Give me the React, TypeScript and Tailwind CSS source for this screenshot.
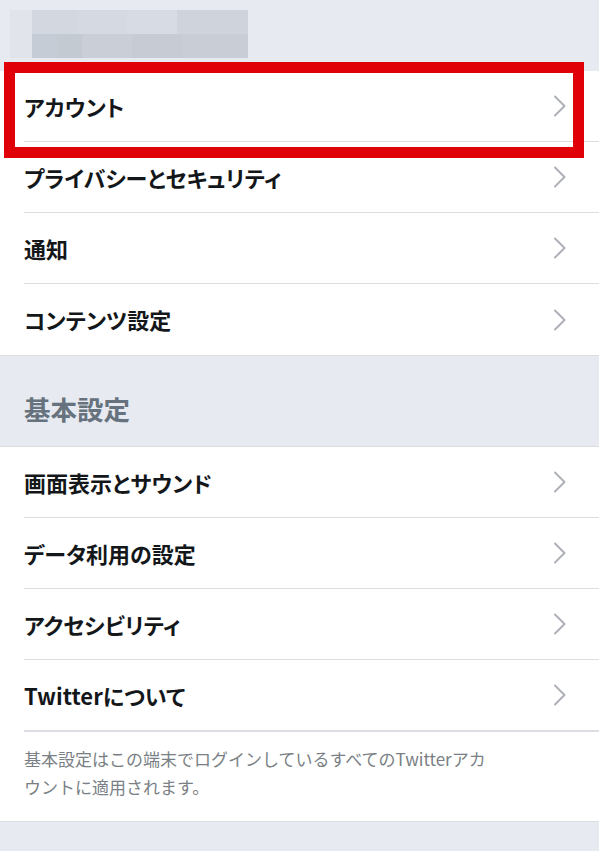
import React from 'react';

const font = { fontFamily: '"Noto Sans CJK JP", "Noto Sans", sans-serif' };

const Chevron = () => (
  <svg width="14" height="22" viewBox="0 0 14 22" fill="none" className="shrink-0">
    <path d="M2 1.5 L11.5 11 L2 20.5" stroke="#adb1b7" strokeWidth="2" strokeLinecap="round" strokeLinejoin="round" />
  </svg>
);

const Row = ({ label, last }: { label: string; last?: boolean }) => (
  <div className="flex h-[71px] items-stretch bg-white pl-6">
    <div className={`flex flex-1 items-center justify-between pr-[32px] ${last ? '' : 'border-b border-[#dcdde2]'}`}>
      <span className="text-[22px] font-bold text-[#14171a] [font-feature-settings:'palt']">{label}</span>
      <Chevron />
    </div>
  </div>
);

export default function App() {
  return (
    <div className="min-h-[851px] w-[599px] bg-[#e7eaf1]" style={font}>
      <div className="relative">
        {/* blurred profile header */}
        <div className="flex h-[71px] items-start px-[10px] pt-[10px]">
          <div className="h-[48px] w-[22px] bg-[#e1e4eb]" />
          <div className="flex flex-col">
            <div className="flex h-[24px]">
              <div className="w-[45px] bg-[#d3d8e0]" />
              <div className="w-[50px] bg-[#d5dae2]" />
              <div className="w-[50px] bg-[#d7dce4]" />
              <div className="w-[71px] bg-[#cfd3db]" />
            </div>
            <div className="flex h-[24px]">
              <div className="w-[25px] bg-[#c6ccd5]" />
              <div className="w-[25px] bg-[#c3cad2]" />
              <div className="w-[50px] bg-[#c9ced7]" />
              <div className="w-[50px] bg-[#c6cbd4]" />
              <div className="w-[66px] bg-[#c9ced6]" />
            </div>
          </div>
        </div>

        <div className="border-b border-[#dcdde2]">
          <Row label="アカウント" />
          <Row label="プライバシーとセキュリティ" />
          <Row label="通知" />
          <Row label="コンテンツ設定" last />
        </div>

        {/* highlight box */}
        <div className="pointer-events-none absolute left-[4px] top-[62px] h-[96px] w-[580px] border-[11px] border-[#e00007]" />
      </div>

      <div className="flex h-[90px] items-center px-6 pt-[16px]">
        <span className="text-[26.5px] font-bold text-[#66727d]">基本設定</span>
      </div>

      <div className="border-y border-[#dcdde2] bg-white">
        <Row label="画面表示とサウンド" />
        <Row label="データ利用の設定" />
        <Row label="アクセシビリティ" />
        <Row label="Twitterについて" />
        <div className="ml-6 border-t border-[#dcdde2] pb-[20px] pt-[13px]">
          <p className="w-[470px] text-[17px] leading-[28px] text-[#7a7f85]">
            基本設定はこの端末でログインしているすべてのTwitterアカウントに適用されます。
          </p>
        </div>
      </div>
    </div>
  );
}
